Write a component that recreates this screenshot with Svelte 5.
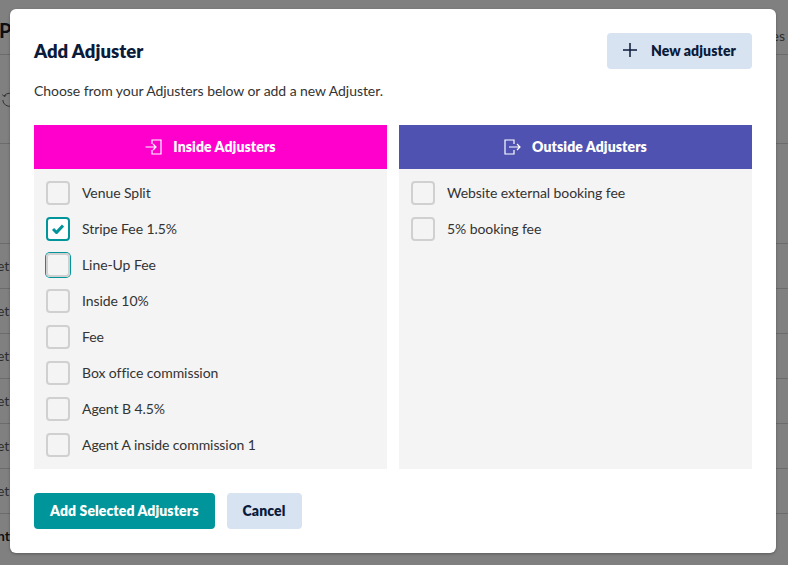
<script>
	const inside = [
		{ label: 'Venue Split' },
		{ label: 'Stripe Fee 1.5%', checked: true },
		{ label: 'Line-Up Fee', focused: true },
		{ label: 'Inside 10%' },
		{ label: 'Fee' },
		{ label: 'Box office commission' },
		{ label: 'Agent B 4.5%' },
		{ label: 'Agent A inside commission 1' }
	];
	const outside = [{ label: 'Website external booking fee' }, { label: '5% booking fee' }];
	const columns = [
		{ title: 'Inside Adjusters', kind: 'inside', items: inside },
		{ title: 'Outside Adjusters', kind: 'outside', items: outside }
	];
	const rows = [0, 1, 2, 3, 4, 5];
</script>

<div class="page">
	<div class="page-head">
		<span class="page-title">Pa</span>
		<span class="page-link">es</span>
	</div>
	<div class="page-tools">
		<svg class="undo" width="16" height="16" viewBox="0 0 16 16" fill="none" stroke="#333" stroke-width="1">
			<path d="M3 5a6.5 6.5 0 1 1-1.2 4M1.500 3.500 3 5.500l2.200-1" />
		</svg>
	</div>
	<div class="page-gap"></div>
	{#each rows as row (row)}
		<div class="page-row">et</div>
	{/each}
	<div class="page-total">nt</div>
</div>

<div class="modal">
	<header class="modal-head">
		<h2>Add Adjuster</h2>
		<button class="btn secondary new">
			<svg width="14" height="14" viewBox="0 0 14 14" stroke="#0b1b3a" stroke-width="1.500">
				<path d="M7 0v14M0 7h14" />
			</svg>
			New adjuster
		</button>
	</header>
	<p class="intro">Choose from your Adjusters below or add a new Adjuster.</p>

	<div class="columns">
		{#each columns as col (col.kind)}
			<section class="column">
				<div class="column-head {col.kind}">
					{#if col.kind === 'inside'}
						<svg width="17" height="16" viewBox="0 0 17 16" fill="none" stroke="#fff" stroke-width="1.200">
							<path d="M7 5V1h9v14H7v-4M0.500 8h10M8 5l3 3-3 3" />
						</svg>
					{:else}
						<svg width="17" height="16" viewBox="0 0 17 16" fill="none" stroke="#fff" stroke-width="1.200">
							<path d="M10 5V1H1v14h9v-4M5 8h11M13 5l3 3-3 3" />
						</svg>
					{/if}
					<span>{col.title}</span>
				</div>
				<ul>
					{#each col.items as item (item.label)}
						<li>
							<span class="box" class:checked={item.checked} class:focused={item.focused}>
								{#if item.checked}
									<svg width="12" height="10" viewBox="0 0 12 10" fill="none" stroke="#00959a" stroke-width="3">
										<path d="M1 5l3.500 3.500L11 1.500" />
									</svg>
								{/if}
							</span>
							{item.label}
						</li>
					{/each}
				</ul>
			</section>
		{/each}
	</div>

	<footer class="actions">
		<button class="btn primary">Add Selected Adjusters</button>
		<button class="btn secondary cancel">Cancel</button>
	</footer>
</div>

<style>
	:global(body) {
		margin: 0;
		background: #808080;
		font-family: Lato, 'Open Sans', sans-serif;
		overflow: hidden;
	}

	.page {
		height: 565px;
		overflow: hidden;
		color: #1a1a1a;
		font-size: 14px;
	}

	.page-head {
		height: 54px;
		display: flex;
		justify-content: space-between;
		align-items: flex-start;
		border-bottom: 1px solid #6c6c6c;
	}

	.page-title {
		font-weight: 700;
		font-size: 20px;
		margin: 18px 0 0 -1px;
		color: #0d0d14;
	}

	.page-link {
		margin: 27px 3px 0 0;
		color: #2e2e2e;
		font-size: 14px;
	}

	.page-tools {
		height: 88px;
		border-bottom: 1px solid #6c6c6c;
	}

	.undo {
		margin: 36px 0 0 1px;
	}

	.page-gap {
		height: 99px;
		border-bottom: 1px solid #6c6c6c;
	}

	.page-row {
		height: 44px;
		line-height: 44px;
		margin-left: -3px;
		color: #2e2e2e;
		border-bottom: 1px solid #6c6c6c;
	}

	.page-total {
		font-weight: 700;
		line-height: 44px;
		margin-left: -3px;
		color: #111;
	}

	.modal {
		position: absolute;
		left: 10px;
		top: 9px;
		width: 766px;
		height: 544px;
		box-sizing: border-box;
		padding: 24px;
		background: #fff;
		border-radius: 6px;
		box-shadow: 0 1px 3px rgba(0, 0, 0, 0.3);
		display: flex;
		flex-direction: column;
	}

	.modal-head {
		display: flex;
		justify-content: space-between;
		align-items: center;
		height: 36px;
	}

	h2 {
		margin: 0;
		font-size: 18.5px;
		font-weight: 800;
		color: #0b1b3a;
	}

	.intro {
		margin: 12px 0 0;
		font-size: 14px;
		line-height: 20px;
		letter-spacing: -0.055px;
		color: #333;
	}

	.columns {
		margin-top: 24px;
		display: grid;
		grid-template-columns: 353px 353px;
		gap: 12px;
	}

	.column {
		background: #f4f4f4;
		height: 344px;
	}

	.column-head {
		height: 44px;
		display: flex;
		align-items: center;
		justify-content: center;
		gap: 11px;
		color: #fff;
		font-weight: 800;
		font-size: 14px;
		letter-spacing: 0.1px;
	}

	.column-head span {
		margin-bottom: 2px;
	}

	.inside {
		background: #ff00cc;
	}

	.outside {
		background: #4f52b0;
	}

	ul {
		list-style: none;
		margin: 0;
		padding: 6px 12px 0;
	}

	li {
		height: 36px;
		display: flex;
		align-items: center;
		gap: 12px;
		font-size: 14px;
		line-height: 20px;
		letter-spacing: -0.07px;
		color: #333;
	}

	.box {
		width: 24px;
		height: 24px;
		box-sizing: border-box;
		border: 2px solid #d0d0d0;
		border-radius: 4px;
		display: flex;
		align-items: center;
		justify-content: center;
	}

	.box.checked {
		border-color: #00959a;
		background: #fff;
	}

	.box.focused {
		box-shadow: 0 0 0 1px #00959a;
	}

	.actions {
		margin-top: 24px;
		display: flex;
		gap: 12px;
	}

	.btn {
		height: 36px;
		border: none;
		border-radius: 4px;
		font-family: inherit;
		font-size: 14px;
		font-weight: 800;
		letter-spacing: 0.1px;
		padding: 0 16px 2px;
		display: inline-flex;
		align-items: center;
	}

	.primary {
		background: #00959a;
		color: #fff;
	}

	.secondary {
		background: #d8e3f1;
		color: #0b1b3a;
	}

	.new {
		gap: 14px;
	}

	.cancel {
		padding-right: 17px;
	}
</style>
